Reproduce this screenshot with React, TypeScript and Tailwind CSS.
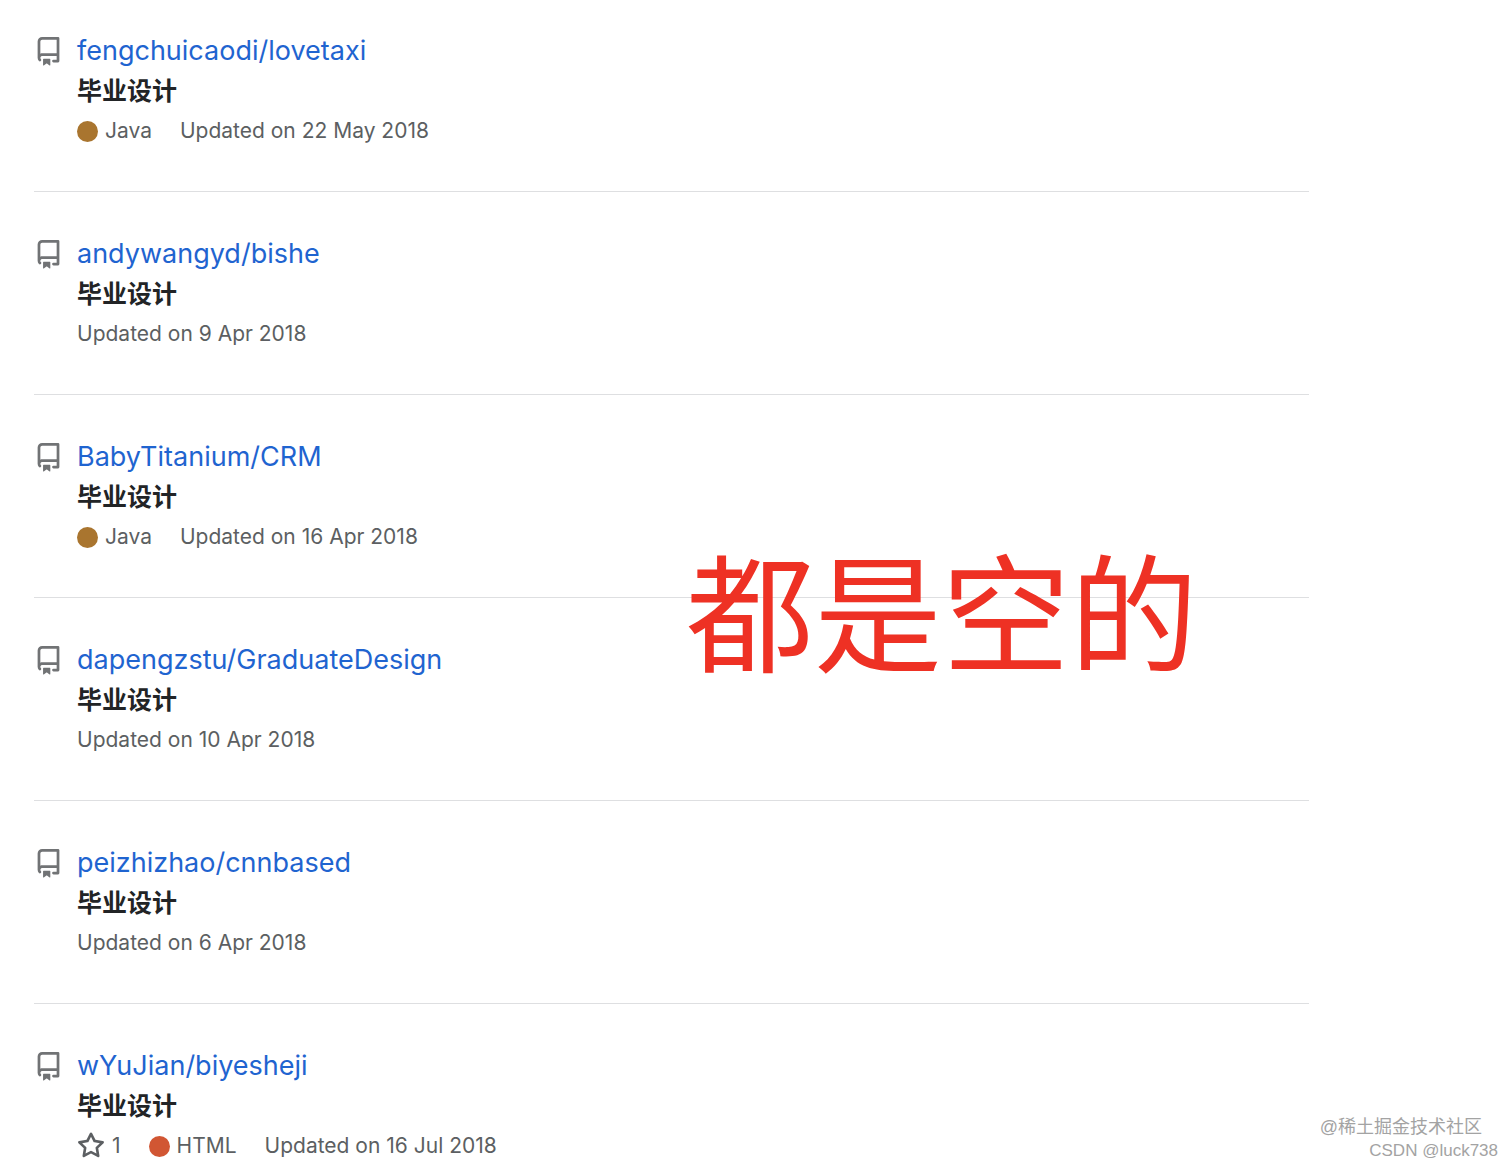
import React from "react";

type Repo = {
  name: string;
  updated: string;
  stars?: number;
  language?: "Java" | "HTML";
};

const repos: Repo[] = [
  { name: "fengchuicaodi/lovetaxi", language: "Java", updated: "22 May 2018" },
  { name: "andywangyd/bishe", updated: "9 Apr 2018" },
  { name: "BabyTitanium/CRM", language: "Java", updated: "16 Apr 2018" },
  { name: "dapengzstu/GraduateDesign", updated: "10 Apr 2018" },
  { name: "peizhizhao/cnnbased", updated: "6 Apr 2018" },
  { name: "wYuJian/biyesheji", stars: 1, language: "HTML", updated: "16 Jul 2018" },
];

const languageColors = {
  Java: "bg-[#a9752f]",
  HTML: "bg-[#d15633]",
};

const RepoIcon = () => (
  <svg viewBox="0 0 16 16" className="size-[29px] shrink-0 fill-[#717375]" aria-hidden="true">
    <path
      fillRule="evenodd"
      d="M2 2.5A2.5 2.5 0 014.5 0h8.75a.75.75 0 01.75.75v12.5a.75.75 0 01-.75.75h-2.5a.75.75 0 110-1.5h1.75v-2h-8a1 1 0 00-.714 1.7.75.75 0 01-1.072 1.05A2.495 2.495 0 012 11.5v-9zm10.5-1V9h-8c-.356 0-.694.074-1 .208V2.5a1 1 0 011-1h8zM5 12.25v3.25a.25.25 0 00.4.2l1.45-1.087a.25.25 0 01.3 0L8.6 15.7a.25.25 0 00.4-.2v-3.25a.25.25 0 00-.25-.25h-3.5a.25.25 0 00-.25.25z"
    />
  </svg>
);

const StarIcon = () => (
  <svg viewBox="0 0 16 16" className="size-7 shrink-0 fill-[#5c5f62]" aria-hidden="true">
    <path
      fillRule="evenodd"
      d="M8 .25a.75.75 0 01.673.418l1.882 3.815 4.21.612a.75.75 0 01.416 1.279l-3.046 2.97.719 4.192a.75.75 0 01-1.088.791L8 12.347l-3.766 1.98a.75.75 0 01-1.088-.79l.72-4.194L.818 6.374a.75.75 0 01.416-1.28l4.21-.611L7.327.668A.75.75 0 018 .25zm0 2.445L6.615 5.5a.75.75 0 01-.564.41l-3.097.45 2.24 2.184a.75.75 0 01.216.664l-.528 3.084 2.769-1.456a.75.75 0 01.698 0l2.77 1.456-.53-3.084a.75.75 0 01.216-.664l2.24-2.183-3.096-.45a.75.75 0 01-.564-.41L8 2.694v.001z"
    />
  </svg>
);

const RepoItem = ({ repo }: { repo: Repo }) => (
  <li className="flex gap-[14px] border-b border-[#dedfe1] pt-[42px] pb-10 first:pt-[31px] last:border-0 last:pb-0">
    <div className="flex h-10 items-center">
      <RepoIcon />
    </div>
    <div>
      <h3 className="text-[27px] leading-10">
        <a href="#" className="text-[#1f64d0] hover:underline">
          {repo.name}
        </a>
      </h3>
      <p className="text-[25px] leading-10 font-bold text-[#222426]">毕业设计</p>
      <div className="flex h-10 items-center text-[21px] text-[#5c5f62]">
        {repo.stars && (
          <a href="#" className="mr-7 flex items-center gap-[7px]">
            <StarIcon />
            {repo.stars}
          </a>
        )}
        {repo.language && (
          <span className="mr-7 flex items-center gap-[7px]">
            <span className={`size-[21px] rounded-full ${languageColors[repo.language]}`} />
            {repo.language}
          </span>
        )}
        <span>Updated on {repo.updated}</span>
      </div>
    </div>
  </li>
);

const App = () => {
  return (
    <main className="relative overflow-hidden bg-white font-['Inter','Noto_Sans_CJK_SC',sans-serif]">
      <ul className="mr-[203px] ml-[34px]">
        {repos.map((repo) => (
          <RepoItem key={repo.name} repo={repo} />
        ))}
      </ul>
      <p className="absolute top-[553px] left-[686px] text-[128px] leading-none whitespace-nowrap text-[#ee3124]">
        都是空的
      </p>
      <div className="absolute right-[14px] bottom-[3px] text-right font-['Liberation_Sans','Noto_Sans_CJK_SC',sans-serif] text-[#a3a3a3]">
        <p className="mr-4 text-lg leading-6">@稀土掘金技术社区</p>
        <p className="text-[17px] leading-6">CSDN @luck738</p>
      </div>
    </main>
  );
};

export default App;
